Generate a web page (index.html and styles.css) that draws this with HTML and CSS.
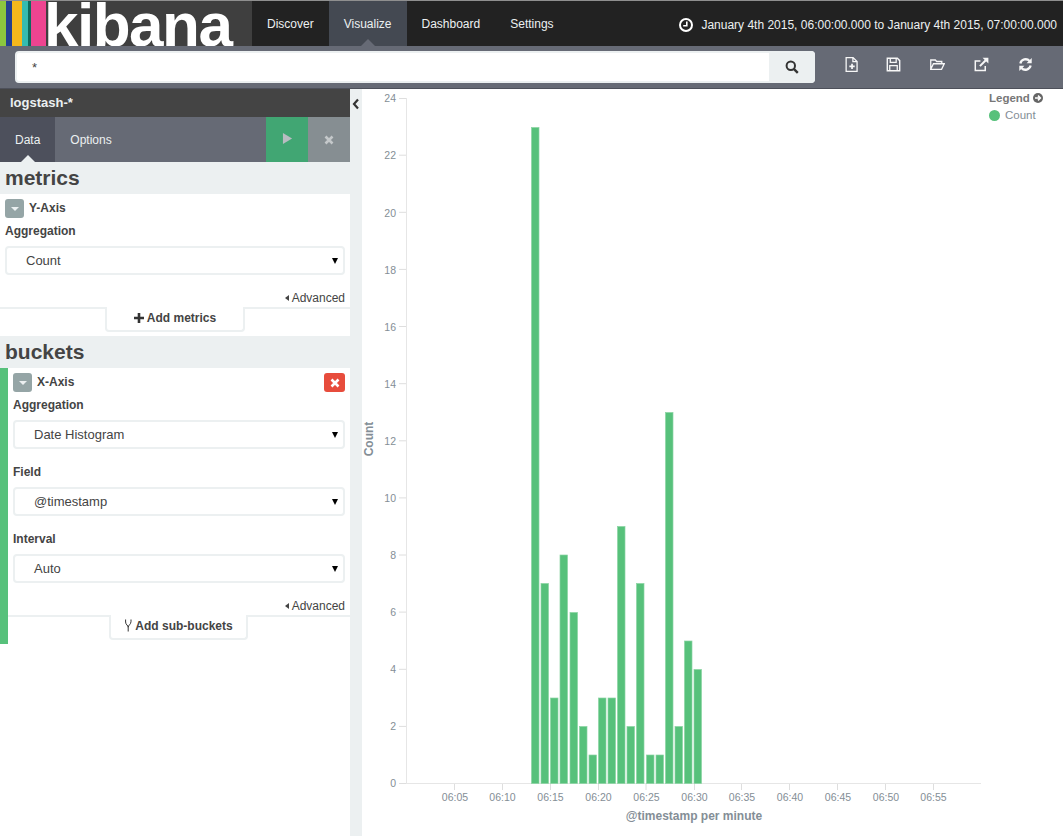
FILE: index.html
```html
<!DOCTYPE html>
<html lang="en">
<head>
<meta charset="utf-8">
<title>Kibana</title>
<link rel="stylesheet" href="styles.css">
</head>
<body>
<header class="navbar">
  <div class="logo">
    <div class="stripes"><i class="s1"></i><i class="s2"></i><i class="s3"></i><i class="s4"></i><i class="s5"></i><i class="s6"></i></div>
    <span class="wordmark">kibana</span>
  </div>
  <nav class="nav">
    <a class="nav-item">Discover</a>
    <a class="nav-item active">Visualize</a>
    <a class="nav-item">Dashboard</a>
    <a class="nav-item">Settings</a>
  </nav>
  <div class="time">
    <svg class="clock" viewBox="0 0 14 14"><circle cx="7" cy="7" r="6" fill="none" stroke="#fff" stroke-width="2"/><path d="M7.8 3.4V7.8H4.2" fill="none" stroke="#fff" stroke-width="1.6"/></svg>
    <span>January 4th 2015, 06:00:00.000 to January 4th 2015, 07:00:00.000</span>
  </div>
</header>
<div class="toolbar">
  <div class="search">
    <div class="search-input">*</div>
    <div class="search-btn">
      <svg viewBox="0 0 14 14" class="ic-search"><circle cx="5.8" cy="5.8" r="4.2" fill="none" stroke="#333" stroke-width="2"/><path d="M8.8 8.8L12.8 12.8" stroke="#333" stroke-width="2.4"/></svg>
    </div>
  </div>
  <div class="tools">
    <svg class="tool" viewBox="0 0 14 14"><path d="M2 .6H8.5L12.2 4.2V13.4H2Z M8.3 .6V4.4H12.2" fill="none" stroke="#fff" stroke-width="1.2"/><path d="M7.5 6.3V11.3M5 8.8H10" stroke="#fff" stroke-width="1.6"/></svg>
    <svg class="tool tool-save" viewBox="0 0 14 14"><path d="M1.2 1.2H10.6L12.8 3.4V12.8H1.2Z" fill="none" stroke="#fff" stroke-width="1.3"/><path d="M4 1.2V5H9.5V1.2M3.5 12.8V8H10.5V12.8" fill="none" stroke="#fff" stroke-width="1.2"/></svg>
    <svg class="tool" viewBox="0 0 14 14"><path d="M.7 11.5V2.8H5L6.2 4.2H11V6.3M.7 11.5L3.2 6.3H13.3L10.8 11.5Z" fill="none" stroke="#fff" stroke-width="1.2"/></svg>
    <svg class="tool" viewBox="0 0 14 14"><path d="M10.5 8.5V12.5H1.2V3.8H6" fill="none" stroke="#fff" stroke-width="1.4"/><path d="M5.5 8.5L11 3" stroke="#fff" stroke-width="1.9"/><path d="M8 .6H13.4V6Z" fill="#fff"/></svg>
    <svg class="tool" viewBox="0 0 14 14"><path d="M2.2 6A5 5 0 0 1 10.8 3.8M11.8 8A5 5 0 0 1 3.2 10.2" fill="none" stroke="#fff" stroke-width="2.1"/><path d="M12.8 1V5.8H8ZM1.2 13V8.2H6Z" fill="#fff"/></svg>
  </div>
</div>
<main class="main">
  <aside class="sidebar">
    <div class="index-title">logstash-*</div>
    <div class="tabs">
      <div class="tab active">Data</div>
      <div class="tab">Options</div>
      <div class="actions">
        <div class="run"><svg viewBox="0 0 12 12" class="ic-run"><path d="M1 0L11 6L1 12Z" fill="#b9bcc1"/></svg></div>
        <div class="cancel"><svg viewBox="0 0 10 10" class="ic-x"><path d="M1.5 1.5L8.5 8.5M8.5 1.5L1.5 8.5" stroke="#c4c8ca" stroke-width="2.6"/></svg></div>
      </div>
    </div>

    <h2 class="section">metrics</h2>
    <section class="agg">
      <div class="agg-head">
        <span class="toggle"><i class="caret"></i></span>
        <span class="agg-name">Y-Axis</span>
      </div>
      <div class="label">Aggregation</div>
      <div class="select">Count</div>
      <div class="advanced"><i class="adv-caret"></i>Advanced</div>
    </section>
    <div class="add-row">
      <div class="add-btn add-metrics">
        <svg viewBox="0 0 10 10" class="ic-plus"><path d="M5 0V10M0 5H10" stroke="#333" stroke-width="2.6"/></svg>
        <span>Add metrics</span>
      </div>
    </div>

    <h2 class="section buckets-title">buckets</h2>
    <div class="bucket">
      <section class="agg agg-bucket">
        <div class="agg-head">
          <span class="toggle"><i class="caret"></i></span>
          <span class="agg-name">X-Axis</span>
          <span class="remove"><svg viewBox="0 0 10 10" class="ic-x"><path d="M1.5 1.5L8.5 8.5M8.5 1.5L1.5 8.5" stroke="#fff" stroke-width="2.6"/></svg></span>
        </div>
        <div class="label">Aggregation</div>
        <div class="select">Date Histogram</div>
        <div class="label label-next">Field</div>
        <div class="select">@timestamp</div>
        <div class="label label-next">Interval</div>
        <div class="select">Auto</div>
        <div class="advanced"><i class="adv-caret"></i>Advanced</div>
      </section>
      <div class="add-row add-row-bucket">
        <div class="add-btn add-sub">
          <svg viewBox="0 0 8 13" class="ic-fork"><path d="M1.6 .5V3C1.6 6 4.2 6 4.2 8.5V12.5M7 .5V2.5C7 5.5 4.2 6 4.2 8.5" fill="none" stroke="#333" stroke-width="1"/></svg>
          <span>Add sub-buckets</span>
        </div>
      </div>
    </div>
  </aside>

  <div class="collapser">
    <svg viewBox="0 0 8 12" class="ic-collapse"><path d="M6 1.5L2 6L6 10.5" fill="none" stroke="#333" stroke-width="2.2"/></svg>
  </div>

  <div class="chart">
    <svg class="chart-svg" width="701" height="747" viewBox="362 89 701 747">
      <g class="grid-line">
        <path d="M406.5 98V784M406 783.5H981"/>
      </g>
      <g class="tick">
        <path d="M399 783.5H406M399 726.4H406M399 669.3H406M399 612.1H406M399 555H406M399 497.9H406M399 440.8H406M399 383.7H406M399 326.5H406M399 269.4H406M399 212.3H406M399 155.2H406M399 98.5H406"/>
        <path d="M454.5 784V790M502.5 784V790M550.5 784V790M598.5 784V790M646 784V790M694.5 784V790M741.5 784V790M789.5 784V790M837.5 784V790M885.5 784V790M933.5 784V790"/>
      </g>
      <g class="bars">
        <rect x="531.5" y="127.5" width="7.5" height="656"/>
        <rect x="541" y="583.5" width="7.5" height="200"/>
        <rect x="550.5" y="698" width="7.5" height="85.5"/>
        <rect x="560" y="555" width="7.5" height="228.5"/>
        <rect x="570" y="612.5" width="7.5" height="171"/>
        <rect x="579.5" y="726.5" width="7.5" height="57"/>
        <rect x="589" y="755" width="7.5" height="28.5"/>
        <rect x="598.5" y="698" width="7.5" height="85.5"/>
        <rect x="608" y="698" width="7.5" height="85.5"/>
        <rect x="617.5" y="526.5" width="7.5" height="257"/>
        <rect x="627" y="726.5" width="7.5" height="57"/>
        <rect x="636.5" y="583.5" width="7.5" height="200"/>
        <rect x="646.5" y="755" width="7.5" height="28.5"/>
        <rect x="656" y="755" width="7.5" height="28.5"/>
        <rect x="665.5" y="412.5" width="7.5" height="371"/>
        <rect x="675" y="726.5" width="7.5" height="57"/>
        <rect x="684.5" y="641" width="7.5" height="142.5"/>
        <rect x="694" y="669.5" width="7.5" height="114"/>
      </g>
      <g class="y-labels">
        <text x="396" y="787">0</text><text x="396" y="730">2</text><text x="396" y="673">4</text><text x="396" y="616">6</text><text x="396" y="559">8</text><text x="396" y="502">10</text><text x="396" y="445">12</text><text x="396" y="388">14</text><text x="396" y="331">16</text><text x="396" y="274">18</text><text x="396" y="217">20</text><text x="396" y="159">22</text><text x="396" y="102">24</text>
      </g>
      <g class="x-labels">
        <text x="455" y="801">06:05</text><text x="502.5" y="801">06:10</text><text x="550.5" y="801">06:15</text><text x="598.5" y="801">06:20</text><text x="646.5" y="801">06:25</text><text x="694.5" y="801">06:30</text><text x="742" y="801">06:35</text><text x="790" y="801">06:40</text><text x="838" y="801">06:45</text><text x="886" y="801">06:50</text><text x="933.5" y="801">06:55</text>
      </g>
      <text class="axis-title" x="694" y="820">@timestamp per minute</text>
      <text class="axis-title" transform="translate(373 439) rotate(-90)">Count</text>
    </svg>
    <div class="legend">
      <div class="legend-title">Legend <svg viewBox="0 0 10 10" class="ic-legend"><circle cx="5" cy="5" r="5" fill="#666"/><path d="M2 5H7M5 2.6L7.4 5L5 7.4" fill="none" stroke="#fff" stroke-width="1.5"/></svg></div>
      <div class="legend-item"><i class="dot"></i>Count</div>
    </div>
  </div>
</main>
</body>
</html>
```

FILE: styles.css
```css
* { box-sizing: border-box; }
html, body { margin: 0; padding: 0; height: 100%; overflow: hidden; }
body {
  font-family: "Liberation Sans", Arial, sans-serif;
  font-size: 12px;
  color: #444;
  background: #fff;
  display: flex;
  flex-direction: column;
}

/* top bar */
.navbar {
  height: 46px;
  flex: none;
  display: flex;
  background: #222;
  border-top: 1px solid #8f8f8f;
}
.logo {
  width: 252px;
  background: #3f3f3f;
  display: flex;
  overflow: hidden;
}
.stripes { display: flex; height: 45px; width: 46px; flex: none; }
.stripes i { display: block; }
.s1 { width: 6px; background: #8cc63f; }
.s2 { width: 6px; background: #25408f; }
.s3 { width: 10px; background: #f5b81c; }
.s4 { width: 6px; background: #35bcb0; }
.s5 { width: 3px; background: #0e6b5e; }
.s6 { width: 15px; background: #ee4490; }
.wordmark {
  font-weight: 700;
  font-size: 62px;
  line-height: 47px;
  height: 45px;
  color: #fff;
  letter-spacing: -1.5px;
  margin-left: -2px;
}
.nav { display: flex; }
.nav-item {
  height: 45px;
  padding: 0 15px;
  line-height: 46px;
  color: #ecf0f1;
  font-size: 12px;
  position: relative;
}
.nav-item.active { background: #444952; }
.nav-item.active::after {
  content: "";
  position: absolute;
  left: 50%;
  bottom: 0;
  margin-left: -7px;
  border: 7px solid transparent;
  border-top: 0;
  border-bottom-color: #666a75;
}
.time {
  margin-left: auto;
  padding-right: 6px;
  display: flex;
  align-items: center;
  gap: 8px;
  color: #ecf0f1;
  font-size: 12px;
  height: 48px;
}
.clock { width: 14px; height: 14px; }

/* search toolbar */
.toolbar {
  height: 43px;
  flex: none;
  background: #666a75;
  display: flex;
  align-items: flex-start;
  padding: 5px 0 0 15px;
  border-bottom: 1px solid #4d505a;
}
.search {
  width: 800px;
  height: 32px;
  display: flex;
  border: 2px solid #ecf0f1;
  border-radius: 4px;
  background: #fff;
}
.search-input { flex: 1; padding: 7px 15px; font-size: 13px; color: #444; line-height: 15px; }
.search-btn {
  width: 46px;
  margin: -2px -2px -2px 0;
  background: #ecf0f1;
  border-radius: 0 4px 4px 0;
  display: flex;
  align-items: center;
  justify-content: center;
}
.ic-search { width: 14px; height: 14px; }
.tools { display: flex; gap: 29px; padding: 6px 0 0 29px; }
.tool { width: 15px; height: 15px; display: block; opacity: .95; }
.tool-save { margin-left: -2px; }

/* layout */
.main { flex: 1; display: flex; min-height: 0; }
.sidebar { width: 350px; flex: none; background: #fff; }
.collapser { width: 12px; flex: none; background: #ecf0f1; position: relative; }
.ic-collapse { width: 8px; height: 12px; display: block; position: absolute; left: 2px; top: 9px; }

.index-title {
  height: 28px;
  background: #444;
  color: #ecf0f1;
  font-weight: 700;
  font-size: 13px;
  line-height: 27px;
  padding-left: 10px;
}
.tabs { height: 45px; display: flex; background: #666a75; color: #ecf0f1; }
.tab { padding: 0 15px; line-height: 47px; font-size: 12px; position: relative; }
.tab.active { background: #4d505c; }
.tab.active::after {
  content: "";
  position: absolute;
  left: 50%;
  bottom: 0;
  margin-left: -7px;
  border: 7px solid transparent;
  border-top: 0;
  border-bottom-color: #ecf0f1;
}
.actions { margin-left: auto; display: flex; }
.run, .cancel { width: 42px; display: flex; align-items: center; justify-content: center; }
.run { background: #41a673; }
.cancel { background: #868e92; }
.ic-run { width: 11px; height: 11px; margin-top: -2px; }
.ic-x { width: 10px; height: 10px; display: block; }

.section {
  height: 32px;
  margin: 0;
  padding-left: 5px;
  background: #ecf0f1;
  font-size: 21px;
  line-height: 32px;
  font-weight: 700;
  color: #444;
}
.buckets-title { margin-top: 4px; }
.agg { padding: 5px 5px 0; background: #fff; }
.agg-head { display: flex; align-items: center; height: 19px; line-height: 17px; }
.toggle {
  width: 19px;
  height: 19px;
  background: #95a5a6;
  border-radius: 3px;
  display: flex;
  align-items: center;
  justify-content: center;
}
.caret {
  display: block;
  border: 4px solid transparent;
  border-bottom: 0;
  border-top: 4px solid #ecf0f1;
}
.agg-name { margin-left: 5px; font-weight: 700; font-size: 12px; color: #444; }
.remove {
  margin-left: auto;
  width: 21px;
  height: 19px;
  background: #e74c3c;
  border-radius: 3px;
  display: flex;
  align-items: center;
  justify-content: center;
}
.label { margin-top: 6px; font-size: 12px; font-weight: 700; line-height: 14px; color: #444; }
.label-next { margin-top: 16px; }
.select {
  margin-top: 8px;
  height: 29px;
  border: 2px solid #ecf0f1;
  border-radius: 4px;
  padding-left: 19px;
  line-height: 25px;
  font-size: 13px;
  color: #444;
  position: relative;
}
.select::after {
  content: "";
  position: absolute;
  right: 5px;
  top: 10px;
  border: 3px solid transparent;
  border-bottom: 0;
  border-top: 6px solid #000;
}
.advanced {
  margin-top: 16px;
  height: 14px;
  text-align: right;
  font-size: 12px;
  line-height: 14px;
  color: #444;
}
.adv-caret {
  display: inline-block;
  margin-right: 3px;
  vertical-align: 1px;
  border: 3.5px solid transparent;
  border-left: 0;
  border-right: 4px solid #444;
}
.add-row {
  margin-top: 2px;
  height: 25px;
  border-top: 2px solid #ecf0f1;
  position: relative;
}
.add-btn {
  position: absolute;
  top: -2px;
  height: 25px;
  padding-bottom: 2px;
  border: 2px solid #ecf0f1;
  border-top: 0;
  border-radius: 0 0 4px 4px;
  background: #fff;
  display: flex;
  align-items: center;
  justify-content: center;
  gap: 3px;
  font-weight: 700;
  font-size: 12px;
  color: #444;
}
.add-metrics { left: 105px; width: 140px; }
.add-sub { left: 101px; width: 139px; }
.ic-plus { width: 10px; height: 10px; }
.ic-fork { width: 8px; height: 13px; }

.bucket { border-left: 8px solid #57c17b; height: 276px; }
.agg-bucket { padding-right: 5px; }

/* chart */
.chart { flex: 1; position: relative; background: #fff; min-width: 0; }
.chart-svg { display: block; }
.grid-line path { stroke: #e6e6e6; stroke-width: 1; fill: none; }
.tick path { stroke: #dedede; stroke-width: 1; fill: none; }
.bars rect { fill: #57c17b; stroke: #8ad4a3; stroke-width: .7; }
.y-labels text, .x-labels text { font-size: 10.5px; fill: #848e96; font-family: "Liberation Sans", Arial, sans-serif; }
.y-labels text { text-anchor: end; }
.x-labels text { text-anchor: middle; }
.axis-title { font-size: 12px; font-weight: 700; fill: #848e96; text-anchor: middle; font-family: "Liberation Sans", Arial, sans-serif; }
.legend { position: absolute; right: 19px; top: 2px; width: 55px; font-size: 11.5px; color: #777; }
.legend-title { font-weight: 700; display: flex; align-items: center; gap: 3px; white-space: nowrap; height: 14px; }
.ic-legend { width: 10px; height: 10px; }
.legend-item { display: flex; align-items: center; gap: 5px; margin-top: 3px; color: #848e96; white-space: nowrap; height: 14px; }
.dot { display: block; width: 11px; height: 11px; border-radius: 50%; background: #57c17b; }
```
